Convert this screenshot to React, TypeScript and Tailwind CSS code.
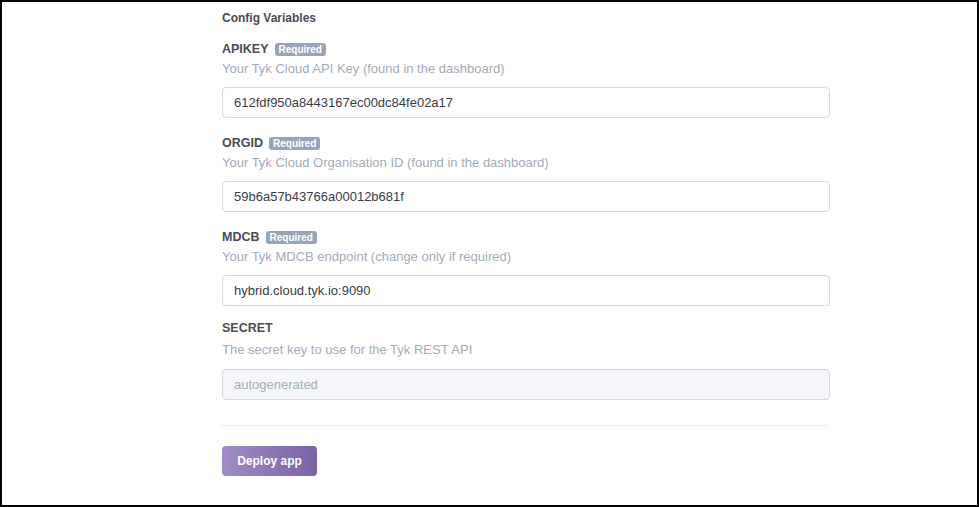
import React from "react";

type Field = {
  name: string;
  required: boolean;
  desc: string;
  value: string;
  placeholder?: boolean;
};

const fields: Field[] = [
  { name: "APIKEY", required: true, desc: "Your Tyk Cloud API Key (found in the dashboard)", value: "612fdf950a8443167ec00dc84fe02a17" },
  { name: "ORGID", required: true, desc: "Your Tyk Cloud Organisation ID (found in the dashboard)", value: "59b6a57b43766a00012b681f" },
  { name: "MDCB", required: true, desc: "Your Tyk MDCB endpoint (change only if required)", value: "hybrid.cloud.tyk.io:9090" },
  { name: "SECRET", required: false, desc: "The secret key to use for the Tyk REST API", value: "autogenerated", placeholder: true },
];

export default function App() {
  return (
    <div
      className="w-[979px] h-[507px] border-2 border-black bg-white box-border"
      style={{ fontFamily: '"Liberation Sans", Arial, sans-serif' }}
    >
      <div className="ml-[220px] w-[608px] pt-[8px]">
        <div className="text-[12px] font-bold text-[#4b4b55] leading-[16px]">Config Variables</div>
        <div className="flex flex-col">
          {fields.map((f, i) => (
            <div key={f.name} className={i === 0 ? "mt-[15px]" : f.required ? "mt-[17px]" : "mt-[14px]"}>
              <div className="flex items-center h-[16px]">
                <span className="text-[12.5px] font-bold text-[#4b4b55] leading-[16px]">{f.name}</span>
                {f.required && (
                  <span className="ml-[6px] h-[13px] px-[4px] rounded-[3px] bg-[#9aa4b8] text-white text-[10px] font-bold leading-[13px] flex items-center">
                    Required
                  </span>
                )}
              </div>
              <div className={(f.required ? "mt-[4px]" : "mt-[6px]") + " text-[13px] text-[#a4abb9] leading-[16px]"}>{f.desc}</div>
              <div
                className={
                  (f.required ? "mt-[10px] " : "mt-[11px] ") +
                  "h-[31px] rounded-[4px] border border-[#d3d9e4] flex items-center px-[11px] text-[13px] " +
                  (f.placeholder ? "bg-[#f4f6fa] text-[#a7adb9]" : "bg-white text-[#3c3c46]")
                }
              >
                {f.value}
              </div>
            </div>
          ))}
        </div>
        <div className="mt-[25px] border-t border-[#e8ebf1]" />
        <div className="mt-[20px]">
          <button className="h-[30px] w-[95px] rounded-[4px] bg-gradient-to-r from-[#a08dc6] to-[#7a62a7] text-white text-[12px] font-bold">
            Deploy app
          </button>
        </div>
      </div>
    </div>
  );
}
